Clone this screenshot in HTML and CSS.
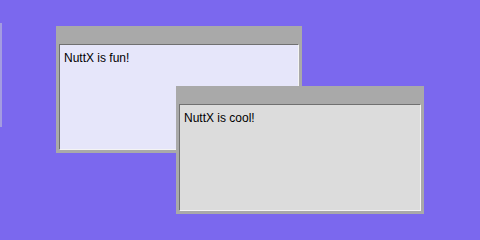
FILE: index.html
```html
<!DOCTYPE html>
<html>
<head>
<meta charset="utf-8">
<link rel="stylesheet" href="styles.css">
</head>
<body>
<div class="desktop">
  <div class="window offscreen"></div>
  <div class="window win-fun">
    <div class="client client-fun">NuttX is fun!</div>
  </div>
  <div class="window win-cool">
    <div class="client client-cool">NuttX is cool!</div>
  </div>
</div>
</body>
</html>
```
FILE: styles.css
```css
html, body {
  margin: 0;
  padding: 0;
}
body {
  width: 480px;
  height: 240px;
  overflow: hidden;
  background: #7b68ee;
  font-family: "Liberation Sans", Arial, sans-serif;
  font-size: 12px;
  color: #000;
}
.desktop {
  position: relative;
  width: 480px;
  height: 240px;
}
.window {
  position: absolute;
  box-sizing: border-box;
  width: 248px;
  height: 128px;
  background: #a9a9a9;
  padding: 18px 3px 3px 3px;
  display: flex;
}
.offscreen {
  left: -246px;
  top: 23px;
  height: 104px;
  background: #a49ce0;
}
.win-fun {
  left: 56px;
  top: 26px;
  width: 246px;
  height: 127px;
}
.win-cool {
  left: 176px;
  top: 86px;
}
.client {
  flex: 1;
  box-sizing: border-box;
  border-top: 1px solid #707070;
  border-left: 1px solid #707070;
  border-right: 1px solid #f4f4f4;
  border-bottom: 1px solid #f4f4f4;
  padding: 6px 4px;
}
.client-fun {
  background: #e6e6fa;
}
.client-cool {
  background: #dcdcdc;
}
```
